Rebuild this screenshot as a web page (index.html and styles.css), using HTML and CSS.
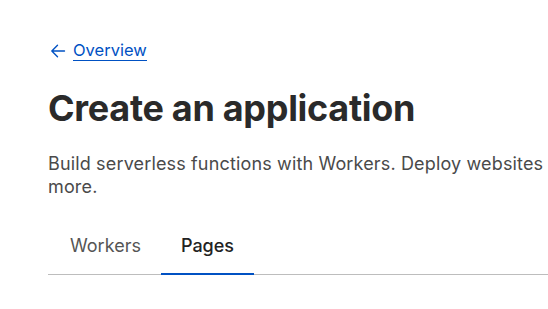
FILE: index.html
```html
<!DOCTYPE html>
<html lang="en">
<head>
<meta charset="utf-8">
<link rel="stylesheet" href="styles.css">
</head>
<body>
<main class="page">
  <a class="back" href="#">
    <svg class="back-icon" width="16" height="16" viewBox="0 0 16 16" fill="none" stroke="currentColor" stroke-width="1.4" stroke-linecap="round" stroke-linejoin="round"><path d="M14.5 8H1.8M7.5 2.3L1.8 8l5.7 5.7"/></svg>
    <span class="back-text">Overview</span>
  </a>
  <h1 class="title">Create an application</h1>
  <p class="desc">Build serverless functions with Workers. Deploy websites<br>more.</p>
  <nav class="tabs">
    <a class="tab" href="#">Workers</a>
    <a class="tab tab-active" href="#">Pages</a>
  </nav>
</main>
</body>
</html>
```
FILE: styles.css
```css
html, body {
  margin: 0;
  padding: 0;
  background: #ffffff;
  overflow: hidden;
}
body {
  font-family: Inter, "Noto Sans", sans-serif;
  color: #222222;
}
.page {
  padding: 40px 0 0 48px;
  width: 500px;
}
.back {
  display: inline-flex;
  align-items: center;
  gap: 7px;
  color: #0051c3;
  text-decoration: none;
  font-size: 16.5px;
  line-height: 22px;
}
.back-icon {
  display: block;
  margin-left: 2px;
}
.back-text {
  border-bottom: 1.5px solid #0051c3;
  line-height: 20px;
}
.title {
  margin: 23px 0 0 0;
  font-size: 36px;
  line-height: 44px;
  font-weight: 700;
  color: #2a2a2a;
  letter-spacing: -0.3px;
}
.desc {
  margin: 22px 0 0 0;
  font-size: 18px;
  line-height: 23px;
  color: #4a4a4a;
  white-space: nowrap;
  letter-spacing: 0.15px;
}
.tabs {
  display: flex;
  margin-top: 36px;
  padding-left: 2px;
  border-bottom: 1px solid #bdbdbd;
}
.tab {
  padding: 0 20px 15px 20px;
  font-size: 18px;
  line-height: 24px;
  color: #555555;
  text-decoration: none;
  border-bottom: 3px solid transparent;
  margin-bottom: -2px;
  letter-spacing: 0;
}
.tab-active {
  color: #222222;
  font-weight: 500;
  border-bottom-color: #0051c3;
}
```
